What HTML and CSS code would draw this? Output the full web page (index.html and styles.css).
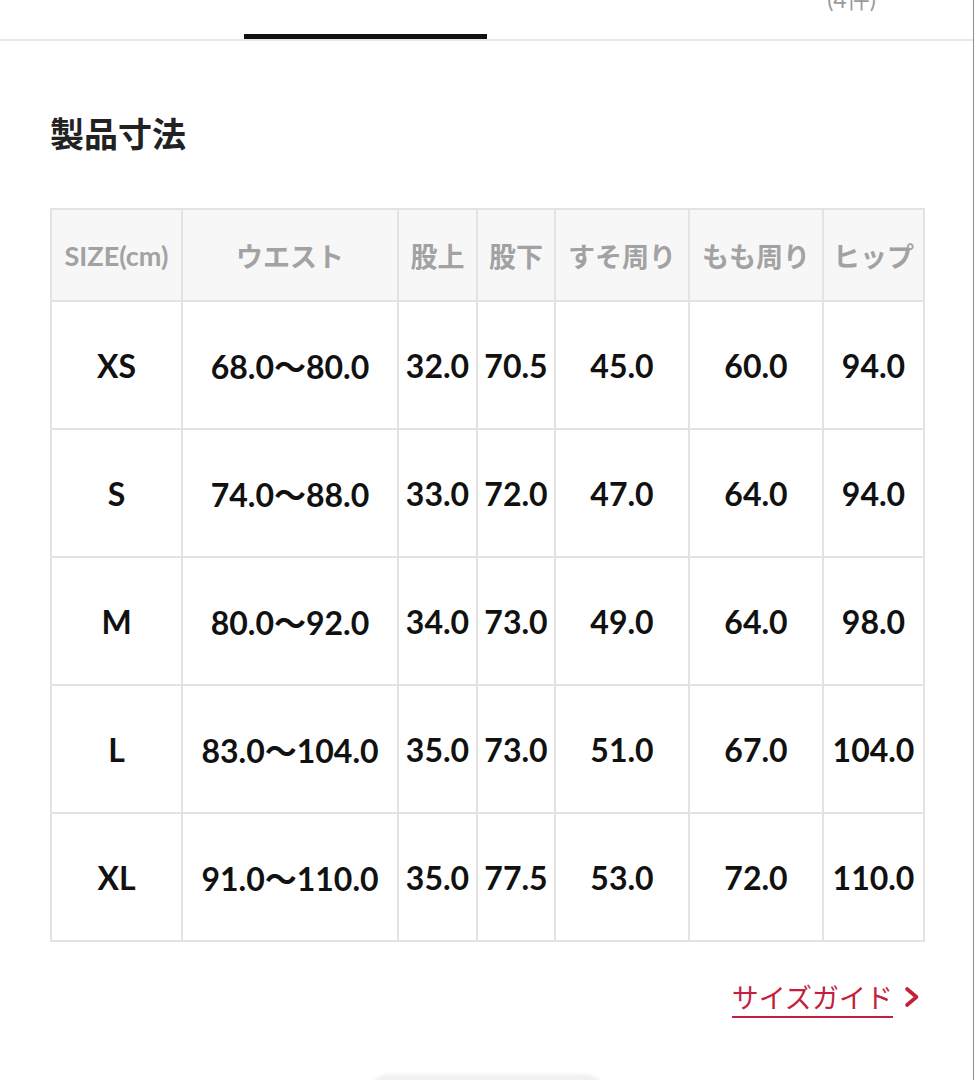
FILE: index.html
```html
<!DOCTYPE html>
<html lang="ja">
<head>
<meta charset="utf-8">
<title>製品寸法</title>
<link rel="stylesheet" href="styles.css">
</head>
<body>
<div class="page">
  <nav class="tabs">
    <div class="tab"></div>
    <div class="tab active"></div>
    <div class="tab"></div>
    <div class="tab"><span class="count">(4件)</span></div>
  </nav>

  <section class="size">
    <h2 class="title">製品寸法</h2>
    <table class="size-table">
      <colgroup>
        <col class="c1"><col class="c2"><col class="c3"><col class="c4"><col class="c5"><col class="c6"><col class="c7">
      </colgroup>
      <thead>
        <tr>
          <th>SIZE(cm)</th><th>ウエスト</th><th>股上</th><th>股下</th><th>すそ周り</th><th>もも周り</th><th>ヒップ</th>
        </tr>
      </thead>
      <tbody>
        <tr><td>XS</td><td>68.0〜80.0</td><td>32.0</td><td>70.5</td><td>45.0</td><td>60.0</td><td>94.0</td></tr>
        <tr><td>S</td><td>74.0〜88.0</td><td>33.0</td><td>72.0</td><td>47.0</td><td>64.0</td><td>94.0</td></tr>
        <tr><td>M</td><td>80.0〜92.0</td><td>34.0</td><td>73.0</td><td>49.0</td><td>64.0</td><td>98.0</td></tr>
        <tr><td>L</td><td>83.0〜104.0</td><td>35.0</td><td>73.0</td><td>51.0</td><td>67.0</td><td>104.0</td></tr>
        <tr><td>XL</td><td>91.0〜110.0</td><td>35.0</td><td>77.5</td><td>53.0</td><td>72.0</td><td>110.0</td></tr>
      </tbody>
    </table>
    <div class="guide">
      <a class="guide-link" href="#">サイズガイド</a>
      <svg class="chev" width="18" height="22" viewBox="0 0 18 22"><path d="M4 3 L13.5 11 L4 19" fill="none" stroke="currentColor" stroke-width="3.6" stroke-linecap="round" stroke-linejoin="round"/></svg>
    </div>
  </section>

  <div class="more">
    <button class="more-btn" type="button"></button>
  </div>
</div>
</body>
</html>
```

FILE: styles.css
```css
* { box-sizing: border-box; }

html, body {
  margin: 0;
  padding: 0;
  background: #fff;
}

body {
  font-family: Lato, "Noto Sans CJK JP", sans-serif;
  color: #111;
  overflow: hidden;
}

.page {
  width: 974px;
  height: 1080px;
  border-right: 1px solid #8c8c8c;
  overflow: hidden;
}

/* tabs (scrolled partly out of view) */
.tabs {
  display: flex;
  margin-top: -81px;
  height: 122px;
  border-bottom: 2px solid #e8e8e8;
}

.tab {
  flex: 1;
  display: flex;
  flex-direction: column;
  align-items: center;
  justify-content: flex-end;
  padding-bottom: 26px;
  font-size: 23px;
  line-height: 28px;
  color: #9a9a9a;
}

.tab.active {
  border-bottom: 5px solid #111;
  margin: 0 0.5px;
}

/* size section */
.size {
  padding: 72px 51px 0 50px;
}

.title {
  margin: 0 0 55px;
  font-family: "Noto Sans CJK JP", sans-serif;
  font-size: 34px;
  line-height: 40px;
  font-weight: 700;
  color: #222;
}

.size-table {
  width: 873px;
  border-collapse: collapse;
  table-layout: fixed;
  border: 2px solid #e3e3e3;
}

.c1 { width: 131px; }
.c2 { width: 216px; }
.c3 { width: 79px; }
.c4 { width: 78px; }
.c5 { width: 134px; }
.c6 { width: 134px; }
.c7 { width: 101px; }

.size-table th,
.size-table td {
  border: 2px solid #e3e3e3;
  text-align: center;
  vertical-align: middle;
  padding: 0;
  white-space: nowrap;
}

.size-table th {
  height: 92px;
  background: #f7f7f7;
  color: #a2a2a2;
  font-size: 27px;
  font-weight: 700;
}

.size-table td {
  height: 128px;
  font-size: 32px;
  font-weight: 700;
  color: #111;
}

/* guide link */
.guide {
  display: flex;
  justify-content: flex-end;
  align-items: center;
  gap: 10px;
  margin-top: 37px;
  padding-right: 1px;
  color: #c5203b;
}

.guide-link {
  font-family: "Noto Sans CJK JP", sans-serif;
  font-size: 27px;
  line-height: 36px;
  color: #c5203b;
  text-decoration: none;
  border-bottom: 2px solid #c5203b;
  padding-bottom: 1px;
}

.chev {
  display: block;
  margin-top: -3px;
}

/* bottom button */
.more {
  display: flex;
  justify-content: center;
  margin-top: 58px;
}

.more-btn {
  width: 236px;
  height: 64px;
  border: 0;
  border-radius: 20px;
  background: #f1f1f1;
  box-shadow: 0 -1px 4px rgba(0,0,0,0.08);
}
```
